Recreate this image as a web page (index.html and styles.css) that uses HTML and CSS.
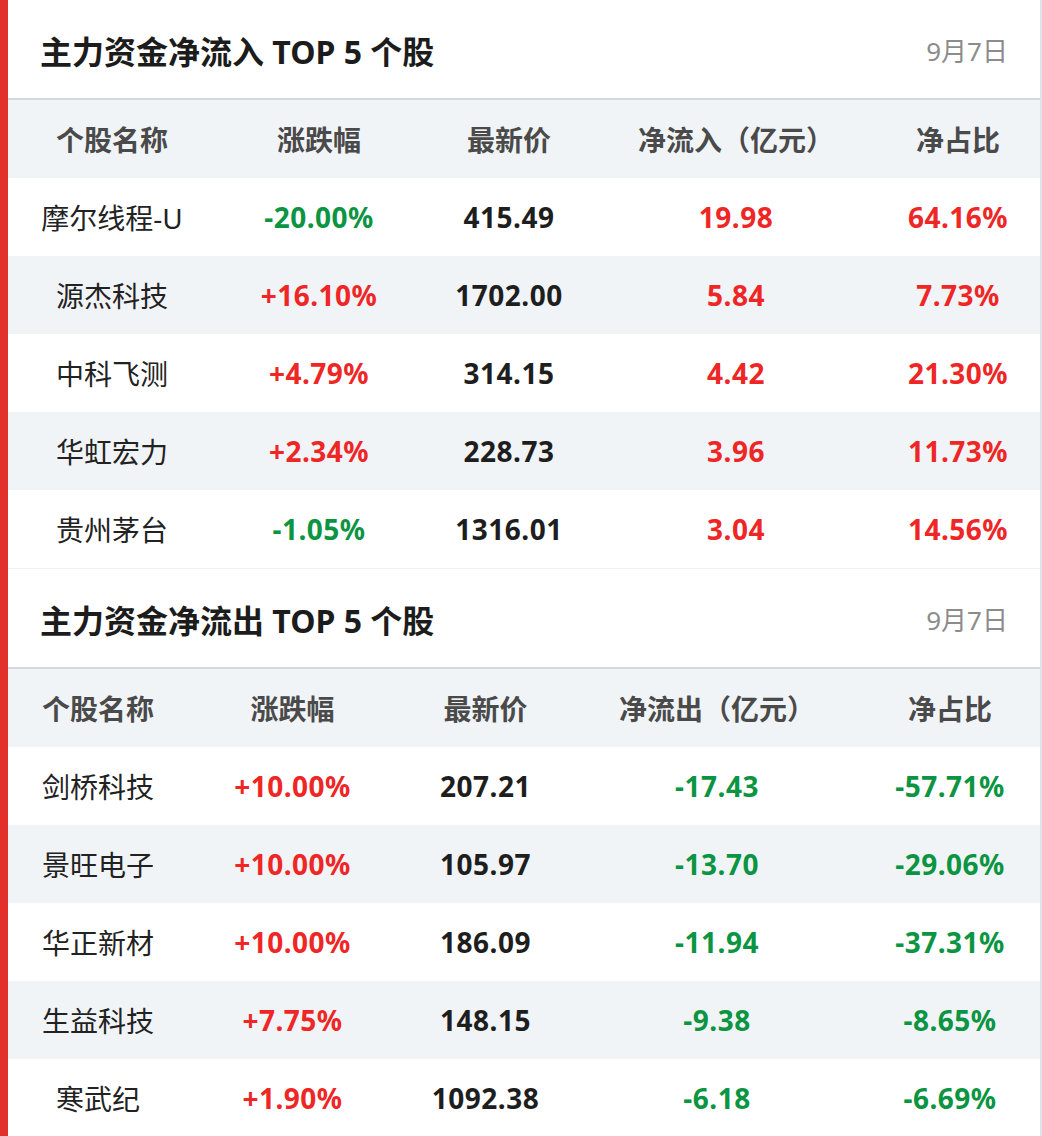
FILE: index.html
```html
<!DOCTYPE html>
<html lang="zh-CN">
  <head>
    <meta charset="UTF-8" />
    <meta name="viewport" content="width=device-width, initial-scale=1.0" />
    <title>主力资金流向</title>
    <link rel="stylesheet" href="styles.css">
  </head>
  <body>
    <div class="board">
      <!-- 净流入 -->
      <section class="panel">
        <div class="panel-head">
          <h2>主力资金净流入 TOP 5 个股</h2>
          <span class="date">9月7日</span>
        </div>
        <table class="flow in">
          <colgroup>
            <col class="c1"><col class="c2"><col class="c3"><col class="c4"><col class="c5">
          </colgroup>
          <thead>
            <tr><th>个股名称</th><th>涨跌幅</th><th>最新价</th><th>净流入（亿元）</th><th>净占比</th></tr>
          </thead>
          <tbody>
            <tr><td class="name">摩尔线程-U</td><td class="down">-20.00%</td><td class="price">415.49</td><td class="up">19.98</td><td class="up">64.16%</td></tr>
            <tr><td class="name">源杰科技</td><td class="up">+16.10%</td><td class="price">1702.00</td><td class="up">5.84</td><td class="up">7.73%</td></tr>
            <tr><td class="name">中科飞测</td><td class="up">+4.79%</td><td class="price">314.15</td><td class="up">4.42</td><td class="up">21.30%</td></tr>
            <tr><td class="name">华虹宏力</td><td class="up">+2.34%</td><td class="price">228.73</td><td class="up">3.96</td><td class="up">11.73%</td></tr>
            <tr><td class="name">贵州茅台</td><td class="down">-1.05%</td><td class="price">1316.01</td><td class="up">3.04</td><td class="up">14.56%</td></tr>
          </tbody>
        </table>
      </section>

      <!-- 净流出 -->
      <section class="panel">
        <div class="panel-head">
          <h2>主力资金净流出 TOP 5 个股</h2>
          <span class="date">9月7日</span>
        </div>
        <table class="flow out">
          <colgroup>
            <col class="c1"><col class="c2"><col class="c3"><col class="c4"><col class="c5">
          </colgroup>
          <thead>
            <tr><th>个股名称</th><th>涨跌幅</th><th>最新价</th><th>净流出（亿元）</th><th>净占比</th></tr>
          </thead>
          <tbody>
            <tr><td class="name">剑桥科技</td><td class="up">+10.00%</td><td class="price">207.21</td><td class="down">-17.43</td><td class="down">-57.71%</td></tr>
            <tr><td class="name">景旺电子</td><td class="up">+10.00%</td><td class="price">105.97</td><td class="down">-13.70</td><td class="down">-29.06%</td></tr>
            <tr><td class="name">华正新材</td><td class="up">+10.00%</td><td class="price">186.09</td><td class="down">-11.94</td><td class="down">-37.31%</td></tr>
            <tr><td class="name">生益科技</td><td class="up">+7.75%</td><td class="price">148.15</td><td class="down">-9.38</td><td class="down">-8.65%</td></tr>
            <tr><td class="name">寒武纪</td><td class="up">+1.90%</td><td class="price">1092.38</td><td class="down">-6.18</td><td class="down">-6.69%</td></tr>
          </tbody>
        </table>
      </section>
    </div>
  </body>
</html>
```

FILE: styles.css
```css
* {
  margin: 0;
  padding: 0;
  box-sizing: border-box;
  font-family: "Noto Sans", "Noto Sans CJK SC", sans-serif;
}

body {
  background: #dde3ea;
}

.board {
  width: 1040px;
  border-left: 8px solid #e2302a;
  background: #f0f1f3;
}

.panel {
  background: #fff;
  margin-bottom: 1px;
}

.panel:last-child {
  margin-bottom: 0;
}

.panel-head {
  height: 100px;
  display: flex;
  justify-content: space-between;
  align-items: center;
  padding: 2px 32px 0 32px;
  border-bottom: 2px solid #d3d8de;
}

.panel-head h2 {
  font-size: 32px;
  font-weight: 700;
  color: #1c1c1c;
}

.date {
  font-size: 26px;
  color: #8c8c8c;
}

.flow {
  width: 100%;
  border-collapse: collapse;
  table-layout: fixed;
}

.in .c1 { width: 208px; }
.in .c2 { width: 206px; }
.in .c3 { width: 174px; }
.in .c4 { width: 280px; }
.in .c5 { width: 164px; }

.out .c1 { width: 180px; }
.out .c2 { width: 209px; }
.out .c3 { width: 177px; }
.out .c4 { width: 286px; }
.out .c5 { width: 180px; }

.flow th,
.flow td {
  height: 78px;
  text-align: center;
  font-size: 28px;
  white-space: nowrap;
}

.flow thead tr {
  background: #f1f4f7;
}

.flow th {
  font-weight: 700;
  color: #4a4a4a;
}

.flow tbody tr:nth-child(even) {
  background: #f1f4f7;
}

.flow td {
  font-weight: 700;
  color: #1e1e1e;
  letter-spacing: 0.5px;
}

.flow td.name {
  font-weight: 400;
  color: #222;
  letter-spacing: 0;
}

.up {
  color: #ee2626 !important;
}

.down {
  color: #0b9441 !important;
}
```
